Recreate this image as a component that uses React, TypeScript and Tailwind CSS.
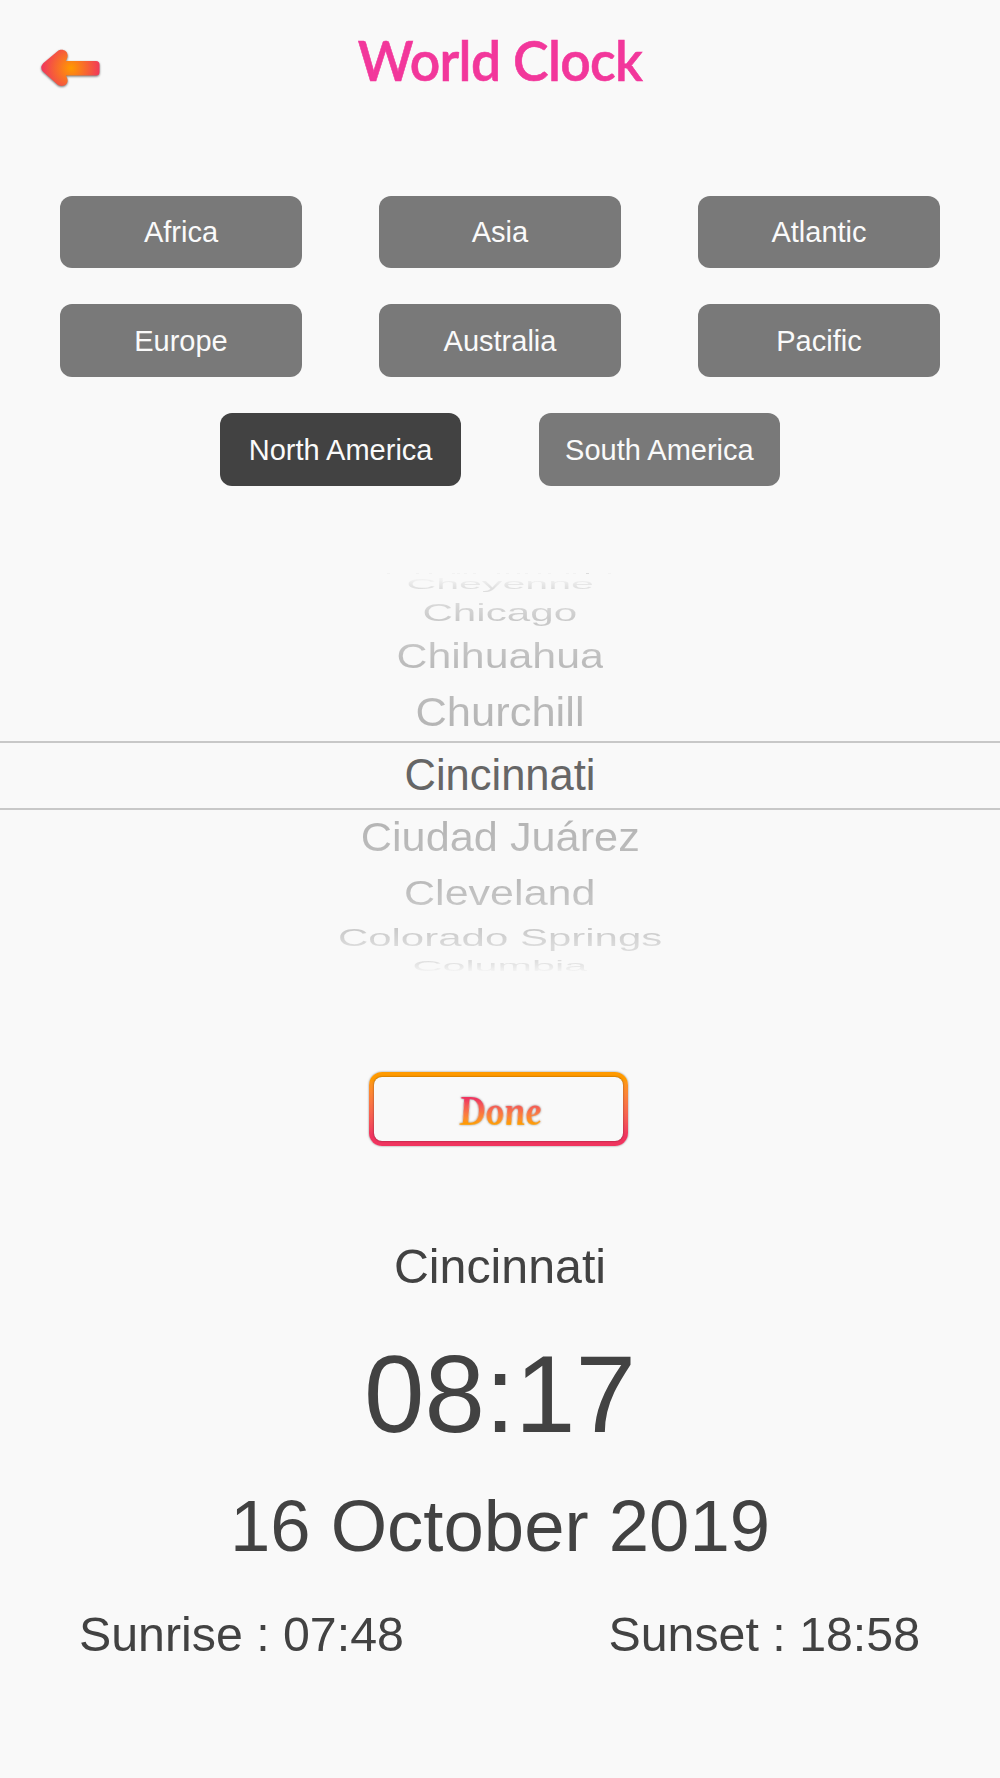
import clsx from "clsx";

interface PickerRow {
  name: string;
  height: string;
  text: string;
}

const mainRegions = ["Africa", "Asia", "Atlantic", "Europe", "Australia", "Pacific"];
const americas = ["North America", "South America"];

// Rows get flatter and fainter the further they are from the centre of the wheel
const rowsAbove: PickerRow[] = [
  { name: "Cheyenne", height: "h-[20px]", text: "scale-x-[0.945] scale-y-[0.32] from-[#f2f2f2] to-[#dedede]" },
  { name: "Chicago", height: "h-[36px]", text: "scale-x-[0.97] scale-y-[0.57] from-[#dadada] to-[#c9c9c9]" },
  { name: "Chihuahua", height: "h-[51px]", text: "scale-x-[0.985] scale-y-[0.8] from-[#c6c6c6] to-[#bababa]" },
  { name: "Churchill", height: "h-[60px] pt-[2px]", text: "scale-y-[0.94] from-[#bbbbbb] to-[#b5b5b5]" },
];

const rowsBelow: PickerRow[] = [
  { name: "Ciudad Juárez", height: "h-[54px]", text: "scale-x-[0.995] scale-y-[0.94] from-[#b5b5b5] to-[#bbbbbb]" },
  { name: "Cleveland", height: "h-[58px]", text: "scale-x-[0.99] scale-y-[0.8] from-[#bababa] to-[#c6c6c6]" },
  { name: "Colorado Springs", height: "h-[30px]", text: "scale-x-[0.965] scale-y-[0.57] from-[#c9c9c9] to-[#dadada]" },
  { name: "Columbia", height: "h-[28px]", text: "scale-x-[0.95] scale-y-[0.32] from-[#dedede] to-[#f2f2f2]" },
];

function BackArrow() {
  return (
    <svg viewBox="0 0 62 40" className="h-10 w-[62px] drop-shadow-[0_1px_1px_rgba(0,0,0,0.55)]">
      <defs>
        <radialGradient id="arrowFill" gradientUnits="userSpaceOnUse" cx="31" cy="20" r="30">
          <stop offset="0" stopColor="#ff9a00" />
          <stop offset="1" stopColor="#f0355f" />
        </radialGradient>
      </defs>
      <path
        d="M3.2 15.2 L17.5 3.2 C21.5 0.2 27.6 2.4 27.6 7.5 C27.6 9.6 26.8 11 25.8 13.1 H56 Q59.5 13.1 59.5 16.6 V24 Q59.5 27.5 56 27.5 H25.8 C26.8 29.4 27.6 30.7 27.6 32.6 C27.6 37.8 21.5 39.6 17.5 36.6 L3.2 23.8 Q-0.6 19.8 3.2 15.2 Z"
        fill="url(#arrowFill)"
      />
    </svg>
  );
}

// Last sliver of the row that is turning out of view
function WheelEdge() {
  return (
    <svg viewBox="0 0 250 3" className="mx-auto block h-[3px] w-[250px]" fill="#f2f2f2">
      {[12, 41, 54, 77, 82, 89, 98, 122, 131, 142, 150, 163, 173, 191, 198, 233].map((x) => (
        <rect key={x} x={x} y="2" width="3" height="1" />
      ))}
      <rect x="211" y="2" width="3" height="1" fill="#dcdcdc" />
    </svg>
  );
}

function RegionButton({ label, active }: { label: string; active?: boolean }) {
  return (
    <button
      className={clsx(
        "h-[72.5px] w-[241.5px] rounded-[12px] pt-[2px] text-[29px] leading-none text-[#fafafa]",
        active ? "bg-[#424242]" : "bg-[#797979]"
      )}
    >
      {label}
    </button>
  );
}

function WheelRow({ name, height, text }: PickerRow) {
  return (
    <li className={clsx("flex items-center justify-center", height)}>
      <span className={clsx("shrink-0 bg-linear-to-b from-20% to-80% bg-clip-text leading-[50px] text-transparent", text)}>
        {name}
      </span>
    </li>
  );
}

export default function App() {
  return (
    <main className="flex h-[1778px] w-[1000px] flex-col overflow-hidden bg-[#f9f9f9] font-['Liberation_Sans',Arial,sans-serif] text-[#424242]">
      {/* Header */}
      <header className="grid h-[195.5px] shrink-0 grid-cols-[341px_318px_341px] items-start">
        <button aria-label="Back" className="mt-[48px] ml-[40px] w-[62px]">
          <BackArrow />
        </button>
        <h1 className="mt-[28px] flex scale-x-[0.955] justify-center font-['Lato',sans-serif] text-[56px] leading-[64px] font-semibold tracking-[-0.7px] whitespace-nowrap text-[#f2379b] [-webkit-text-stroke:0.6px_#f2379b]">
          World Clock
        </h1>
      </header>

      {/* Regions */}
      <section className="flex shrink-0 flex-col gap-[36.25px]">
        <div className="flex flex-wrap justify-between gap-y-[36.25px] px-[60.25px]">
          {mainRegions.map((label) => (
            <RegionButton key={label} label={label} />
          ))}
        </div>
        <div className="flex justify-center gap-[77.25px]">
          {americas.map((label) => (
            <RegionButton key={label} label={label} active={label === "North America"} />
          ))}
        </div>
      </section>

      {/* City wheel */}
      <section className="mt-[85.5px] h-[409px] shrink-0 text-[43.5px] whitespace-nowrap">
        <WheelEdge />
        <ul>
          {rowsAbove.map((row) => (
            <WheelRow key={row.name} {...row} />
          ))}
        </ul>
        <div className="flex h-[69px] items-center justify-center border-y-2 border-[#c8c8c8] pb-[1px] leading-[50px] text-[#666]">
          Cincinnati
        </div>
        <ul>
          {rowsBelow.map((row) => (
            <WheelRow key={row.name} {...row} />
          ))}
        </ul>
      </section>

      {/* Confirm */}
      <button className="mt-[92px] ml-[369px] h-[74px] w-[259px] shrink-0 rounded-[13px] bg-linear-to-b from-[#ff9a00] from-10% to-[#f0355f] to-85% p-[5px] shadow-[0_0_2px_rgba(0,0,0,0.5)]">
        <span className="flex h-full items-center justify-center rounded-[8px] bg-[#f9f9f9] shadow-[0_0_2px_rgba(0,0,0,0.5)]">
          <span className="mt-[3px] ml-[3px] scale-x-90 skew-x-6 bg-linear-to-b from-[#f0355f] from-25% to-[#ff9a00] to-75% bg-clip-text px-1 font-['Liberation_Serif',serif] text-[41.5px] leading-[48px] font-bold text-transparent italic drop-shadow-[0_0_1px_rgba(0,0,0,0.4)]">
            Done
          </span>
        </span>
      </button>

      {/* Selected city */}
      <section className="flex shrink-0 flex-col items-center pt-[92px] text-[48.3px]">
        <h2 className="leading-[56px]">Cincinnati</h2>
        <p className="mt-[39px] text-[108.7px] leading-[124px]">08:17</p>
        <p className="mt-[27px] text-[72.5px] leading-[84px]">16 October 2019</p>
        <div className="mt-[38px] flex w-full justify-between pr-[80px] pl-[79px] leading-[56px]">
          <span>Sunrise : 07:48</span>
          <span>Sunset : 18:58</span>
        </div>
      </section>
    </main>
  );
}
